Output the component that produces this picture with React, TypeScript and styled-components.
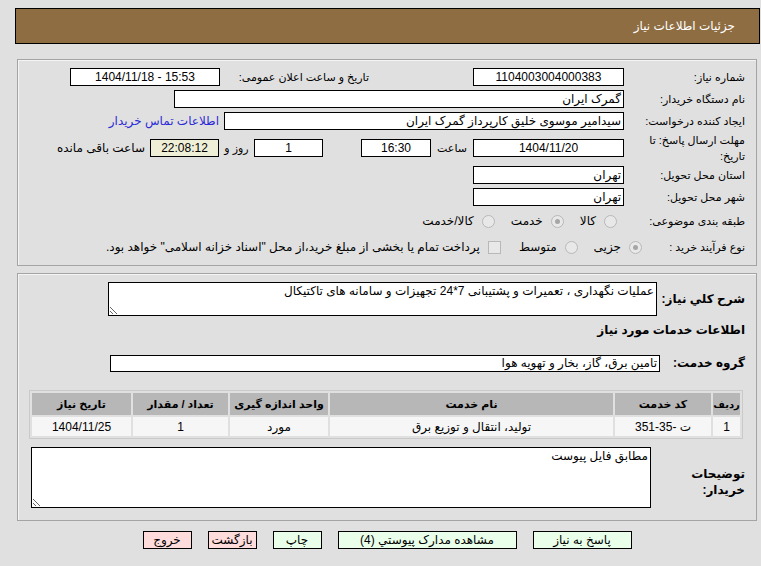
import styled, { createGlobalStyle } from "styled-components";

const GlobalStyle = createGlobalStyle`
  body {
    margin: 0;
    background: #e0e0e0;
    font-family: "Liberation Sans", "DejaVu Sans", sans-serif;
    font-size: 11px;
    color: #000;
  }
`;

const Page = styled.div`
  direction: rtl;
  width: 761px;
  height: 566px;
  overflow: hidden;
  box-sizing: border-box;
  padding: 8px 1px 0 15px;
`;

const Header = styled.div`
  height: 34px;
  background: #8e6d42;
  border: 1px solid #000;
  color: #fff;
  font-size: 12px;
  display: flex;
  align-items: center;
  padding-right: 24px;
`;

const Panel = styled.div<{ $top: number; $pad: string }>`
  margin: ${({ $top }) => $top}px 3px 0 2px;
  border: 1px solid #a4a4a4;
  box-shadow: inset 1px 1px 0 #f4f4f4;
  padding: ${({ $pad }) => $pad};
`;

const Row = styled.div<{ $h: number }>`
  display: flex;
  align-items: center;
  height: ${({ $h }) => $h}px;
`;

const Label = styled.div<{ $w: number; $bold?: boolean; $center?: boolean }>`
  width: ${({ $w }) => $w}px;
  flex-shrink: 0;
  font-weight: ${({ $bold }) => ($bold ? "bold" : "normal")};
  font-size: ${({ $bold }) => ($bold ? "12px" : "11px")};
  text-align: ${({ $center }) => ($center ? "center" : "right")};
  line-height: 16px;
`;

const Field = styled.div<{ $w: number; $h?: number; $center?: boolean; $bg?: string }>`
  width: ${({ $w }) => $w}px;
  height: ${({ $h }) => $h ?? 18}px;
  flex-shrink: 0;
  box-sizing: border-box;
  border: 1px solid #000;
  background: ${({ $bg }) => $bg ?? "#fff"};
  display: flex;
  align-items: center;
  justify-content: ${({ $center }) => ($center ? "center" : "flex-start")};
  padding: 0 2px;
  font-size: 12px;
  white-space: nowrap;
  overflow: hidden;
`;

const Spacer = styled.div<{ $w: number }>`
  width: ${({ $w }) => $w}px;
  flex-shrink: 0;
`;

const Link = styled.span`
  color: #2b2bd8;
  margin-right: 5px;
  font-size: 12px;
`;

const Text = styled.span<{ $ml?: number; $mr?: number }>`
  margin-left: ${({ $ml }) => $ml ?? 0}px;
  margin-right: ${({ $mr }) => $mr ?? 0}px;
  white-space: nowrap;
  font-size: 12px;
`;

const Option = styled.div<{ $mr: number }>`
  display: flex;
  align-items: center;
  gap: 8px;
  margin-right: ${({ $mr }) => $mr}px;
  color: #000;
  font-size: 12px;
  white-space: nowrap;
`;

const Radio = styled.span<{ $checked?: boolean }>`
  width: 11px;
  height: 11px;
  border-radius: 50%;
  border: 1px solid #b8b8b8;
  background: #e8e8e8;
  display: inline-flex;
  align-items: center;
  justify-content: center;
  flex-shrink: 0;
  &::after {
    content: "";
    width: 5px;
    height: 5px;
    border-radius: 50%;
    background: ${({ $checked }) => ($checked ? "#a6a6a6" : "transparent")};
  }
`;

const Check = styled.span`
  width: 11px;
  height: 11px;
  border: 1px solid #b8b8b8;
  background: #e8e8e8;
  flex-shrink: 0;
`;

const Area = styled.textarea<{ $w: number; $h: number }>`
  width: ${({ $w }) => $w}px;
  height: ${({ $h }) => $h}px;
  box-sizing: border-box;
  border: 1px solid #000;
  background: #fff;
  font-family: "Liberation Sans", "DejaVu Sans", sans-serif;
  font-size: 12px;
  padding: 1px 2px;
  margin: 0;
  outline: none;
  direction: rtl;
  flex-shrink: 0;
`;

const Heading = styled.div`
  font-weight: bold;
  font-size: 12px;
`;

const Table = styled.table`
  margin: 6px 2px 0 0;
  width: 712px;
  border: 1px solid #cacaca;
  border-spacing: 2px;
  table-layout: fixed;
`;

const Th = styled.th<{ $w: number; $fs?: number }>`
  width: ${({ $w }) => $w}px;
  height: 22px;
  padding: 0;
  background: #b7b7b7;
  font-size: ${({ $fs }) => $fs ?? 11}px;
  font-weight: bold;
  text-align: center;
  white-space: nowrap;
`;

const Td = styled.td`
  height: 19px;
  padding: 0;
  background: #f6f6f6;
  font-size: 12px;
  text-align: center;
`;

const Buttons = styled.div`
  display: flex;
  justify-content: center;
  gap: 16px;
  margin: 10px 3px 0 2px;
`;

const Button = styled.button<{ $w: number; $bg: string }>`
  width: ${({ $w }) => $w}px;
  height: 18px;
  border: 1px solid #000;
  background: ${({ $bg }) => $bg};
  font-family: "Liberation Sans", "DejaVu Sans", sans-serif;
  font-size: 12px;
  padding: 0;
  color: #000;
  line-height: 16px;
`;

const green = "#eaffea";
const pink = "#ffdcdc";

export default function App() {
  return (
    <>
      <GlobalStyle />
      <Page>
        <Header>جزئیات اطلاعات نیاز</Header>

        <Panel $top={15} $pad="6px 11px 5px 0">
          <Row $h={22}>
            <Label $w={121}>شماره نیاز:</Label>
            <Field $w={151} $center>
              1104003004000383
            </Field>
            <Spacer $w={104} />
            <Label $w={149}>تاریخ و ساعت اعلان عمومی:</Label>
            <Field $w={150} $center dir="ltr">
              1404/11/18 - 15:53
            </Field>
          </Row>
          <Row $h={22}>
            <Label $w={121}>نام دستگاه خریدار:</Label>
            <Field $w={450}>گمرک ایران</Field>
          </Row>
          <Row $h={22}>
            <Label $w={121}>ایجاد کننده درخواست:</Label>
            <Field $w={400}>سیدامیر موسوی خلیق کارپرداز گمرک ایران</Field>
            <Link>اطلاعات تماس خریدار</Link>
          </Row>
          <Row $h={32}>
            <Label $w={121}>
              مهلت ارسال پاسخ: تا
              <br />
              تاریخ:
            </Label>
            <Field $w={151} $center>
              1404/11/20
            </Field>
            <Label $w={42} $center>
              ساعت
            </Label>
            <Field $w={70} $center>
              16:30
            </Field>
            <Spacer $w={38} />
            <Field $w={69} $center>
              1
            </Field>
            <Label $w={35} $center>
              روز و
            </Label>
            <Field $w={69} $center $bg="#efefd8">
              22:08:12
            </Field>
            <Text $mr={5}>ساعت باقی مانده</Text>
          </Row>
          <Row $h={22}>
            <Label $w={121}>استان محل تحویل:</Label>
            <Field $w={151}>تهران</Field>
          </Row>
          <Row $h={22}>
            <Label $w={121}>شهر محل تحویل:</Label>
            <Field $w={151}>تهران</Field>
          </Row>
          <Row $h={26}>
            <Label $w={121}>طبقه بندی موضوعی:</Label>
            <Option $mr={7}>
              <Radio />
              کالا
            </Option>
            <Option $mr={16}>
              <Radio $checked />
              خدمت
            </Option>
            <Option $mr={16}>
              <Radio />
              کالا/خدمت
            </Option>
          </Row>
          <Row $h={26}>
            <Label $w={103}>نوع فرآیند خرید :</Label>
            <Option $mr={0}>
              <Radio $checked />
              جزیی
            </Option>
            <Option $mr={16}>
              <Radio />
              متوسط
            </Option>
            <Option $mr={18}>
              <Check />
              پرداخت تمام یا بخشی از مبلغ خرید،از محل "اسناد خزانه اسلامی" خواهد بود.
            </Option>
          </Row>
        </Panel>

        <Panel $top={7} $pad="6px 11px 12px 0">
          <Row $h={38}>
            <Label $w={88} $bold>
              شرح کلي نیاز:
            </Label>
            <Area
              $w={549}
              $h={34}
              readOnly
              value="عملیات نگهداری ، تعمیرات و پشتیبانی 7*24 تجهیزات و سامانه های تاکتیکال"
            />
          </Row>
          <Row $h={24}>
            <Heading>اطلاعات خدمات مورد نیاز</Heading>
          </Row>
          <Row $h={42}>
            <Label $w={85} $bold>
              گروه خدمت:
            </Label>
            <Field $w={550} $h={17}>
              تامین برق، گاز، بخار و تهویه هوا
            </Field>
          </Row>
          <Table>
            <thead>
              <tr>
                <Th $w={27} $fs={10}>
                  ردیف
                </Th>
                <Th $w={96}>کد خدمت</Th>
                <Th $w={283}>نام خدمت</Th>
                <Th $w={98}>واحد اندازه گیری</Th>
                <Th $w={95}>تعداد / مقدار</Th>
                <Th $w={99}>تاریخ نیاز</Th>
              </tr>
            </thead>
            <tbody>
              <tr>
                <Td>1</Td>
                <Td>ت -35-351</Td>
                <Td>تولید، انتقال و توزیع برق</Td>
                <Td>مورد</Td>
                <Td>1</Td>
                <Td>1404/11/25</Td>
              </tr>
            </tbody>
          </Table>
          <Row $h={69} style={{ alignItems: "flex-end" }}>
            <Label $w={94} $bold style={{ alignSelf: "center", marginTop: 16 }}>
              توضیحات
              <br />
              خریدار:
            </Label>
            <Area $w={620} $h={61} readOnly value="مطابق فایل پیوست" />
          </Row>
        </Panel>

        <Buttons>
          <Button $w={99} $bg={green}>
            پاسخ به نیاز
          </Button>
          <Button $w={179} $bg={green}>
            مشاهده مدارک پیوستي (4)
          </Button>
          <Button $w={49} $bg={green}>
            چاپ
          </Button>
          <Button $w={49} $bg={pink}>
            بازگشت
          </Button>
          <Button $w={49} $bg={pink}>
            خروج
          </Button>
        </Buttons>
      </Page>
    </>
  );
}
